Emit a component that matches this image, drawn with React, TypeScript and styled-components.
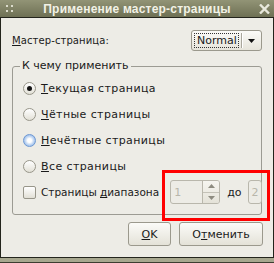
import styled, { createGlobalStyle } from "styled-components";

const GlobalStyle = createGlobalStyle`
  html, body {
    margin: 0;
    padding: 0;
    background: #edece6;
  }
  body {
    font-family: "DejaVu Sans", "Liberation Sans", sans-serif;
    font-size: 11px;
    color: #1a1a1a;
  }
`;

const Window = styled.div`
  position: relative;
  width: 274px;
  height: 263px;
  display: flex;
  flex-direction: column;
  overflow: hidden;
`;

const TitleBar = styled.div`
  height: 17px;
  flex-shrink: 0;
  display: flex;
  align-items: center;
  border-bottom: 1px solid #23241c;
  background: linear-gradient(#929476, #6e7054);
  color: #f2f2e6;
`;

const Grip = styled.div`
  width: 26px;
  display: grid;
  grid-template-columns: 2px 2px;
  grid-template-rows: 2px 2px;
  gap: 3px;
  padding-left: 6px;
  box-sizing: border-box;
  span {
    background: #dcdccc;
  }
`;

const Title = styled.div`
  flex: 1;
  text-align: center;
  font-family: "Liberation Sans", Arial, sans-serif;
  font-weight: bold;
  font-size: 12px;
  letter-spacing: 0.2px;
`;

const CloseBox = styled.div`
  width: 26px;
  display: flex;
  justify-content: flex-end;
  padding-right: 4px;
  box-sizing: border-box;
`;

const Body = styled.div`
  flex: 1;
  display: flex;
  flex-direction: column;
  padding: 12px 11px 0 11px;
  border: 1px solid #23241c;
  border-top: none;
`;

const BottomEdge = styled.div`
  height: 4px;
  flex-shrink: 0;
  background: #a7a78f;
  border-bottom: 1px solid #3c3d30;
`;

const TopRow = styled.div`
  display: flex;
  align-items: center;
  justify-content: space-between;
  height: 21px;
  flex-shrink: 0;
`;

const FieldLabel = styled.span`
  font-size: 10px;
  letter-spacing: 0.1px;
`;

const Mnemonic = styled.span`
  text-decoration: underline;
`;

const Combo = styled.div`
  width: 71px;
  height: 21px;
  box-sizing: border-box;
  display: flex;
  align-items: center;
  border: 1px solid #9b998d;
  border-radius: 3px;
  background: linear-gradient(#fbfbf8, #e6e4da);
  padding: 0 2px;
`;

const ComboText = styled.div`
  flex: 1;
  height: 15px;
  line-height: 13px;
  border: 1px dotted #333;
  box-sizing: border-box;
  padding-left: 2px;
`;

const ComboSep = styled.div`
  width: 1px;
  height: 15px;
  margin-left: 2px;
  background: #a9a79c;
  border-right: 1px solid #fff;
`;

const ComboArrow = styled.div`
  width: 16px;
  display: flex;
  justify-content: center;
`;

const Frame = styled.fieldset`
  margin: 8px 0 0 0;
  padding: 2px 10px 9px 10px;
  border: 1px solid #9c9b93;
  border-radius: 3px;
  min-width: 0;
  flex-shrink: 0;
  display: flex;
  flex-direction: column;
`;

const Legend = styled.legend`
  padding: 0 2px;
  margin-left: -3px;
  line-height: 14px;
`;

const Row = styled.div`
  height: 26px;
  flex-shrink: 0;
  display: flex;
  align-items: center;
  gap: 5px;
  white-space: nowrap;
`;

const RowText = styled.span<{ $spacing?: number; $size?: number }>`
  letter-spacing: ${(p) => p.$spacing ?? 0}px;
  font-size: ${(p) => p.$size ?? 11}px;
`;

const Radio = styled.span<{ $checked?: boolean; $hover?: boolean }>`
  width: 13px;
  height: 13px;
  flex-shrink: 0;
  box-sizing: border-box;
  border-radius: 50%;
  border: 1px solid ${(p) => (p.$hover ? "#6d98d3" : "#98968a")};
  background: ${(p) =>
    p.$hover
      ? "radial-gradient(circle, #ffffff 25%, #b5cff0 60%, #86ade3 100%)"
      : "linear-gradient(#ffffff, #e2e0d6)"};
  display: flex;
  align-items: center;
  justify-content: center;
  &::after {
    content: "";
    width: 5px;
    height: 5px;
    border-radius: 50%;
    background: #151515;
    display: ${(p) => (p.$checked ? "block" : "none")};
  }
`;

const Checkbox = styled.span`
  width: 13px;
  height: 13px;
  flex-shrink: 0;
  box-sizing: border-box;
  border: 1px solid #98968a;
  border-radius: 2px;
  background: linear-gradient(#ffffff, #e2e0d6);
`;

const Spin = styled.div<{ $width: number }>`
  width: ${(p) => p.$width}px;
  height: 24px;
  box-sizing: border-box;
  display: flex;
  align-items: stretch;
  border: 1px solid #b9b7ac;
  border-radius: 3px;
  color: #b8b6ab;
  flex-shrink: 0;
  overflow: hidden;
`;

const SpinValue = styled.div`
  flex: 1;
  display: flex;
  align-items: center;
  padding-left: 3px;
`;

const SpinButtons = styled.div`
  width: 16px;
  display: flex;
  flex-direction: column;
  border-left: 1px solid #b9b7ac;
  background: linear-gradient(#f6f5f0, #e4e2d8);
`;

const SpinHalf = styled.div<{ $top?: boolean }>`
  flex: 1;
  display: flex;
  align-items: center;
  justify-content: center;
  border-bottom: ${(p) => (p.$top ? "1px solid #c4c2b8" : "none")};
`;

const ToLabel = styled.span`
  margin: 0 1px 0 2px;
`;

const ButtonRow = styled.div`
  display: flex;
  justify-content: flex-end;
  gap: 8px;
  margin: 7px -1px 0 0;
  flex-shrink: 0;
`;

const Button = styled.div<{ $width: number }>`
  width: ${(p) => p.$width}px;
  height: 24px;
  box-sizing: border-box;
  display: flex;
  align-items: center;
  justify-content: center;
  border: 1px solid #9b998d;
  border-radius: 3px;
  background: linear-gradient(#fbfbf8, #e4e2d8);
`;

const Highlight = styled.div`
  position: absolute;
  left: 162px;
  top: 170px;
  width: 108px;
  height: 51px;
  box-sizing: border-box;
  border: 3px solid #ff0000;
`;

const Triangle = ({ up, color }: { up?: boolean; color: string }) => (
  <svg width="7" height="4" viewBox="0 0 7 4">
    <path d={up ? "M0 4 L3.5 0 L7 4 Z" : "M0 0 L7 0 L3.5 4 Z"} fill={color} />
  </svg>
);

const radios = [
  { key: "Т", rest: "екущая страница", checked: true },
  { key: "Ч", rest: "ётные страницы" },
  { key: "Н", rest: "ечётные страницы", hover: true },
  { key: "В", rest: "се страницы" },
];

export default function App() {
  return (
    <>
      <GlobalStyle />
      <Window>
        <TitleBar>
          <Grip>
            <span />
            <span />
            <span />
            <span />
          </Grip>
          <Title>Применение мастер-страницы</Title>
          <CloseBox>
            <svg width="11" height="10" viewBox="0 0 11 10">
              <path d="M1 0.5 L10 9.5 M10 0.5 L1 9.5" stroke="#e8e8dc" strokeWidth="2.4" />
            </svg>
          </CloseBox>
        </TitleBar>
        <Body>
          <TopRow>
            <FieldLabel>
              <Mnemonic>М</Mnemonic>астер-страница:
            </FieldLabel>
            <Combo>
              <ComboText>Normal</ComboText>
              <ComboSep />
              <ComboArrow>
                <Triangle color="#111" />
              </ComboArrow>
            </Combo>
          </TopRow>
          <Frame>
            <Legend>К чему применить</Legend>
            {radios.map((r) => (
              <Row key={r.key}>
                <Radio $checked={r.checked} $hover={r.hover} />
                <RowText $spacing={0.4}>
                  <Mnemonic>{r.key}</Mnemonic>
                  {r.rest}
                </RowText>
              </Row>
            ))}
            <Row>
              <Checkbox />
              <RowText $size={10.5}>
                Страницы <Mnemonic>д</Mnemonic>иапазона
              </RowText>
              <Spin $width={50} style={{ marginLeft: 6 }}>
                <SpinValue>1</SpinValue>
                <SpinButtons>
                  <SpinHalf $top>
                    <Triangle up color="#8d8b80" />
                  </SpinHalf>
                  <SpinHalf>
                    <Triangle color="#8d8b80" />
                  </SpinHalf>
                </SpinButtons>
              </Spin>
              <ToLabel>до</ToLabel>
              <Spin $width={14}>
                <SpinValue>2</SpinValue>
              </Spin>
            </Row>
          </Frame>
          <ButtonRow>
            <Button $width={43}>
              <span>
                <Mnemonic>O</Mnemonic>K
              </span>
            </Button>
            <Button $width={84}>
              <span>
                О<Mnemonic>т</Mnemonic>менить
              </span>
            </Button>
          </ButtonRow>
        </Body>
        <BottomEdge />
        <Highlight />
      </Window>
    </>
  );
}
